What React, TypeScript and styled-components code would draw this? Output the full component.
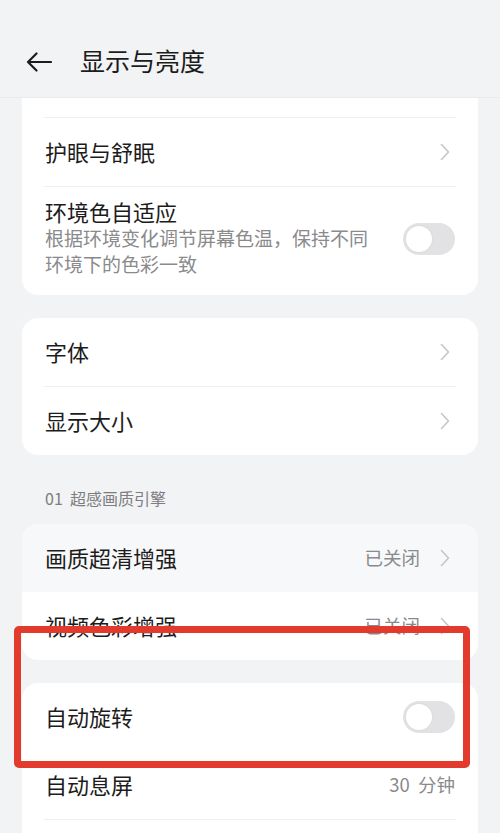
import React from "react";
import styled, { createGlobalStyle } from "styled-components";

const Global = createGlobalStyle`
  html, body { margin: 0; padding: 0; background: #f2f3f5; }
  body { font-family: "Noto Sans CJK SC", "Noto Sans", sans-serif; color: #1c1c1c; }
  * { box-sizing: border-box; }
`;

const Page = styled.div`
  position: relative;
  width: 500px;
  height: 833px;
  overflow: hidden;
  background: #f2f3f5;
  display: flex;
  flex-direction: column;
`;

const Header = styled.div`
  height: 98px;
  flex: none;
  padding: 26px 0 0 26px;
  display: flex;
  align-items: flex-start;
  border-bottom: 1px solid #e9eaec;
`;

const HeaderInner = styled.div`
  height: 72px;
  display: flex;
  align-items: center;
  gap: 28px;
`;

const Title = styled.div`
  font-size: 25px;
  line-height: 32px;
  color: #1c1c1c;
  margin-top: -4px;
`;

const Content = styled.div`
  display: flex;
  flex-direction: column;
  padding: 0 22px;
`;

const Card = styled.div<{ $clipTop?: boolean; $gapTop?: number }>`
  background: #ffffff;
  border-radius: ${(p) => (p.$clipTop ? "0 0 16px 16px" : "16px")};
  padding-top: ${(p) => (p.$clipTop ? "19px" : "0")};
  margin-top: ${(p) => p.$gapTop ?? 0}px;
  overflow: hidden;
  display: flex;
  flex-direction: column;
`;

const Divider = styled.div`
  height: 1px;
  background: #efeff1;
  margin: 0 22px;
`;

const Row = styled.div<{ $pressed?: boolean }>`
  height: 68px;
  display: flex;
  align-items: center;
  padding: 0 23px 0 23px;
  background: ${(p) => (p.$pressed ? "#f7f8f9" : "transparent")};
`;

const TallRow = styled.div`
  display: flex;
  align-items: center;
  padding: 13px 23px 18px 23px;
`;

const TextCol = styled.div`
  flex: 1;
  display: flex;
  flex-direction: column;
`;

const Label = styled.div`
  flex: 1;
  font-size: 22px;
  line-height: 28px;
  color: #1c1c1c;
  margin-top: -3px;
`;

const Sub = styled.div`
  font-size: 19px;
  line-height: 26px;
  color: #8a8a8c;
  max-width: 332px;
`;

const Value = styled.div`
  font-size: 18.5px;
  line-height: 26px;
  color: #8a8a8c;
  margin-right: 20px;
  margin-top: -2px;
`;

const PlainValue = styled(Value)`
  margin-right: 0;
`;

const Section = styled.div`
  font-size: 16px;
  line-height: 22px;
  color: #7d7d80;
  padding: 32px 0 15px 23px;
`;

const Track = styled.div`
  width: 52px;
  height: 32px;
  border-radius: 16px;
  background: #e2e2e4;
  flex: none;
  display: flex;
  align-items: center;
  padding-left: 3px;
`;

const Knob = styled.div`
  width: 26px;
  height: 26px;
  border-radius: 50%;
  background: #ffffff;
  box-shadow: 0 0 0 1px #dcdcde;
`;

const ChevronWrap = styled.div`
  flex: none;
  display: flex;
  margin-right: 5px;
`;

const Highlight = styled.div`
  position: absolute;
  left: 14px;
  top: 626px;
  width: 456px;
  height: 142px;
  border: 7px solid #e23a2d;
  border-radius: 5px;
  pointer-events: none;
`;

const Chevron = () => (
  <ChevronWrap>
    <svg width="10" height="18" viewBox="0 0 10 18">
      <path d="M1.5 1.5 L8.5 9 L1.5 16.5" fill="none" stroke="#c6c6c8" strokeWidth="1.6" strokeLinecap="round" strokeLinejoin="round" />
    </svg>
  </ChevronWrap>
);

const Toggle = () => (
  <Track>
    <Knob />
  </Track>
);

const BackArrow = () => (
  <svg width="26" height="20" viewBox="0 0 26 20">
    <path d="M25 10 H2 M10.5 1.5 L2 10 L10.5 18.5" fill="none" stroke="#1c1c1c" strokeWidth="2.2" strokeLinecap="round" strokeLinejoin="round" />
  </svg>
);

export default function App() {
  return (
    <>
      <Global />
      <Page>
        <Header>
          <HeaderInner>
            <BackArrow />
            <Title>显示与亮度</Title>
          </HeaderInner>
        </Header>
        <Content>
          <Card $clipTop>
            <Divider />
            <Row>
              <Label>护眼与舒眠</Label>
              <Chevron />
            </Row>
            <Divider />
            <TallRow>
              <TextCol>
                <Label>环境色自适应</Label>
                <Sub>根据环境变化调节屏幕色温，保持不同环境下的色彩一致</Sub>
              </TextCol>
              <Toggle />
            </TallRow>
          </Card>

          <Card $gapTop={23}>
            <Row>
              <Label>字体</Label>
              <Chevron />
            </Row>
            <Divider />
            <Row>
              <Label>显示大小</Label>
              <Chevron />
            </Row>
          </Card>

          <Section>01&nbsp; 超感画质引擎</Section>

          <Card>
            <Row $pressed>
              <Label>画质超清增强</Label>
              <Value>已关闭</Value>
              <Chevron />
            </Row>
            <Row>
              <Label>视频色彩增强</Label>
              <Value>已关闭</Value>
              <Chevron />
            </Row>
          </Card>

          <Card $gapTop={23}>
            <Row>
              <Label>自动旋转</Label>
              <Toggle />
            </Row>
            <Row>
              <Label>自动息屏</Label>
              <PlainValue>30&nbsp; 分钟</PlainValue>
            </Row>
            <Divider />
            <Row>
              <Label>屏幕刷新率</Label>
              <Chevron />
            </Row>
          </Card>
        </Content>
        <Highlight />
      </Page>
    </>
  );
}
